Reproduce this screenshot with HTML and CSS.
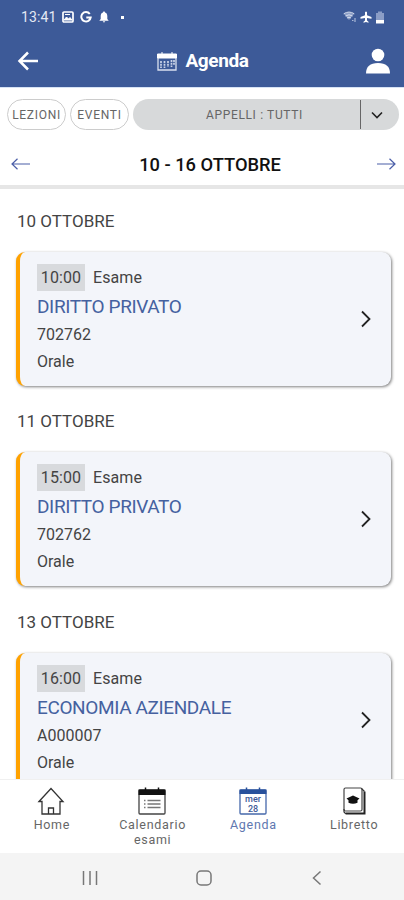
FILE: index.html
```html
<!DOCTYPE html>
<html lang="it">
<head>
    <meta charset="UTF-8">
    <meta name="viewport" content="width=device-width, initial-scale=1.0">
    <title>Agenda</title>
    <link rel="stylesheet" href="styles.css">
</head>
<body>
    <div class="app">
        <header class="header">
            <div class="status-bar">
                <div class="status-left">
                    <span class="clock">13:41</span>
                    <svg width="12" height="12" viewBox="0 0 12 12"><rect x="1" y="1" width="10" height="10" rx="1" fill="none" stroke="#fff" stroke-width="1.7"/><path d="M2 9l2.5-3 2 2L8 6.5 10 9zM3 3.5h5" fill="#fff" stroke="#fff"/></svg>
                    <svg width="12" height="12" viewBox="0 0 12 12"><path d="M9.8 3A4.7 4.7 0 1 0 10.7 6.4H6.3" fill="none" stroke="#fff" stroke-width="2"/></svg>
                    <svg width="12" height="12" viewBox="0 0 12 12"><path d="M6 0.5c.8 0 1 .5 1 1 1.7.5 2.3 1.9 2.3 3.7V8l1.400 1.700H1.300L2.700 8V5.200C2.700 3.400 3.300 2 5 1.500c0-.5.2-1 1-1zM4.700 10.300h2.600L6 11.700z" fill="#fff"/></svg>
                    <span class="dot"></span>
                </div>
                <div class="status-right">
                    <svg width="14" height="12" viewBox="0 0 14 12"><path d="M1 3Q6 -.5 11 3L6 9z" fill="#8fa1c8"/><path d="M.7 2.800Q6-.7 11.300 2.800M2.500 5Q6 2.500 9.500 5M4 7Q6 5.500 8 7" fill="none" stroke="#d5dced"/><path d="M9 9.500h1.500M12 7v4" stroke="#a9b7d6" stroke-width="1.200"/></svg>
                    <svg width="12" height="12" viewBox="0 0 12 12"><path d="M5 1.200Q6-.4 7 1.200V4.300L11.500 6v1.700L7 7v2.500l1.500 1.200v1L6 11l-2.500.700v-1L5 9.500V7L.5 7.700V6L5 4.300z" fill="#fff"/></svg>
                    <svg width="10" height="13" viewBox="0 0 10 13"><path d="M1 2h2V.5h4V2h2v7H1z" fill="#8b9dc6"/><path d="M1 9h8v3.500H1z" fill="#fff"/></svg>
                </div>
            </div>
            <div class="app-bar">
                <svg class="back" width="22" height="20" viewBox="0 0 22 20"><path d="M21 10H3M11 1.500L2.500 10l8.500 8.500" fill="none" stroke="#fff" stroke-width="2.500"/></svg>
                <div class="app-title">
                    <svg width="20" height="19" viewBox="0 0 20 19"><path d="M1 3v15h18V3z" fill="none" stroke="#d9e0ef" stroke-width="1.300"/><path d="M.5 2h19v4H.5zM5 0v3M15 0v3" fill="#fff" stroke="#fff" stroke-width="1"/><path d="M4 9v7M7.500 9v7M11 9v6M14.500 8v7M17 8v5" stroke="#cbd4e8" stroke-width="1.700" stroke-dasharray="2 .7"/></svg>
                    <h1>Agenda</h1>
                </div>
                <svg class="user" width="24" height="26" viewBox="0 0 24 26"><circle cx="12" cy="7" r="6.300" fill="#fff"/><path d="M0 25.500Q0 15 12 15T24 25.500z" fill="#fff"/></svg>
            </div>
        </header>

        <div class="filters">
            <button class="pill">LEZIONI</button>
            <button class="pill">EVENTI</button>
            <button class="select">
                <span class="select-text">APPELLI : TUTTI</span>
                <span class="select-arrow"><svg width="12" height="8" viewBox="0 0 12 8"><path d="M1 1.500l5 5 5-5" fill="none" stroke="#222" stroke-width="1.600"/></svg></span>
            </button>
        </div>

        <div class="week">
            <svg width="20" height="12" viewBox="0 0 20 12"><path d="M19 6H1M6.500.8L1 6l5.500 5.200" fill="none" stroke="#4b5ea8" stroke-width="1.200"/></svg>
            <h2>10 - 16 OTTOBRE</h2>
            <svg width="20" height="12" viewBox="0 0 20 12"><path d="M1 6h18M13.500.8L19 6l-5.500 5.200" fill="none" stroke="#4b5ea8" stroke-width="1.200"/></svg>
        </div>

        <main class="events">
            <section class="day">
                <h3>10 OTTOBRE</h3>
                <div class="card">
                    <div class="info">
                        <p class="kind"><span class="time">10:00</span>Esame</p>
                        <p class="subject">DIRITTO PRIVATO</p>
                        <p class="detail">702762</p>
                        <p class="detail">Orale</p>
                    </div>
                    <svg class="chevron" width="10" height="18" viewBox="0 0 10 18"><path d="M1 1.500L8.500 9 1 16.500" fill="none" stroke="#222" stroke-width="1.800"/></svg>
                </div>
            </section>
            <section class="day">
                <h3>11 OTTOBRE</h3>
                <div class="card">
                    <div class="info">
                        <p class="kind"><span class="time">15:00</span>Esame</p>
                        <p class="subject">DIRITTO PRIVATO</p>
                        <p class="detail">702762</p>
                        <p class="detail">Orale</p>
                    </div>
                    <svg class="chevron" width="10" height="18" viewBox="0 0 10 18"><path d="M1 1.500L8.500 9 1 16.500" fill="none" stroke="#222" stroke-width="1.800"/></svg>
                </div>
            </section>
            <section class="day">
                <h3>13 OTTOBRE</h3>
                <div class="card">
                    <div class="info">
                        <p class="kind"><span class="time">16:00</span>Esame</p>
                        <p class="subject">ECONOMIA AZIENDALE</p>
                        <p class="detail">A000007</p>
                        <p class="detail">Orale</p>
                    </div>
                    <svg class="chevron" width="10" height="18" viewBox="0 0 10 18"><path d="M1 1.500L8.500 9 1 16.500" fill="none" stroke="#222" stroke-width="1.800"/></svg>
                </div>
            </section>
        </main>

        <nav class="tabs">
            <a class="tab">
                <svg width="28" height="28" viewBox="0 0 28 28"><path d="M2 14.500L14 1.500l12 13h-3V27H5V14.500zM11.500 27v-6h5v6" fill="none" stroke="#333" stroke-width="1.300"/></svg>
                <span>Home</span>
            </a>
            <a class="tab">
                <svg width="28" height="28" viewBox="0 0 28 28"><rect x="1" y="3" width="26" height="24" rx="1" fill="#fff" stroke="#444" stroke-width="1.300"/><path d="M.5 2.500h27V8H.5z" fill="#111"/><path d="M7.500.5v3M20.500.5v3" stroke="#111" stroke-width="1.500"/><path d="M9.500 13.500h13M9.500 17h13M9.500 20.500h13" stroke="#777" stroke-width="1.700"/><path d="M6 13.500h1.500M6 17h1.500M6 20.500h1.500" stroke="#777" stroke-width="1.500"/></svg>
                <span>Calendario<br>esami</span>
            </a>
            <a class="tab active">
                <svg width="28" height="28" viewBox="0 0 28 28"><rect x="1" y="3" width="26" height="24" rx="1" fill="#fff" stroke="#4668ab" stroke-width="1.300"/><path d="M.5 2.500h27V7H.5z" fill="#28519c"/><path d="M7.500.5v3M20.500.5v3" stroke="#28519c" stroke-width="1.500"/><text class="icon-text" x="14" y="14.500">mer</text><text class="icon-text" x="14" y="25">28</text></svg>
                <span>Agenda</span>
            </a>
            <a class="tab">
                <svg width="28" height="28" viewBox="0 0 28 28"><path d="M6 26.500h18.500V4.500" fill="none" stroke="#222" stroke-width="2"/><rect x="4" y="1" width="18" height="23" rx="1.500" fill="#fff" stroke="#444" stroke-width="1.200"/><path d="M4 22v3l2 2M21.500 1.500l3 3" fill="none" stroke="#333" stroke-width="1.200"/><path d="M13 8.500l6.500 3-2 1.700v2.500q-4.500 2.200-9 0v-2.500l-2-1.700z" fill="#111"/></svg>
                <span>Libretto</span>
            </a>
        </nav>

        <footer class="system-nav">
            <svg width="16" height="16" viewBox="0 0 16 16"><path d="M1.500 1v14M8 1v14M14.500 1v14" stroke="#777" stroke-width="1.500"/></svg>
            <svg width="16" height="16" viewBox="0 0 16 16"><rect x="1" y="1" width="14" height="14" rx="4" fill="none" stroke="#777" stroke-width="1.500"/></svg>
            <svg width="16" height="16" viewBox="0 0 16 16"><path d="M11.500 1.500L4.500 8l7 6.500" fill="none" stroke="#777" stroke-width="1.500"/></svg>
        </footer>
    </div>
</body>
</html>
```

FILE: styles.css
```css
* {
    box-sizing: border-box;
}

body {
    margin: 0;
    background-color: #fff;
    color: #444;
    font-family: Roboto, sans-serif;
}

h1, h2, h3, p {
    margin: 0;
}

svg {
    display: block;
    flex-shrink: 0;
}

.app {
    display: flex;
    flex-direction: column;
    height: 900px;
    width: 404px;
    overflow: hidden;
}

.header {
    height: 88px;
    flex-shrink: 0;
    background-color: #3d5a98;
    border-bottom: 1px solid #d6e2f5;
    color: #fff;
}

.status-bar {
    display: flex;
    align-items: center;
    justify-content: space-between;
    height: 34px;
    padding: 0 19px 0 21px;
}

.status-left, .status-right {
    display: flex;
    align-items: center;
}

.status-left {
    gap: 6px;
}

.status-right {
    gap: 3px;
}

.clock {
    font-size: 14px;
    letter-spacing: 0.1px;
    color: #e4e9f4;
}

.dot {
    width: 3px;
    height: 3px;
    margin-left: 5px;
    background-color: #fff;
}

.app-bar {
    display: flex;
    align-items: center;
    justify-content: space-between;
    height: 54px;
    padding: 0 14px 0 17px;
}

.app-title {
    display: flex;
    align-items: center;
    gap: 9px;
}

.app-title h1 {
    font-size: 19px;
    font-weight: 700;
    line-height: 24px;
    letter-spacing: -0.4px;
}

.filters {
    display: flex;
    gap: 4px;
    height: 55px;
    flex-shrink: 0;
    padding: 11px 5px 13px 7px;
}

.pill, .select {
    padding: 0;
    border-radius: 16px;
    font-family: inherit;
    font-size: 12px;
    color: #666;
}

.pill {
    width: 59px;
    border: 1px solid #ccc;
    background-color: #fff;
    letter-spacing: 0.7px;
}

.select {
    display: flex;
    flex: 1;
    align-items: center;
    border: none;
    background-color: #d7d9da;
    letter-spacing: 0.65px;
}

.select-text {
    flex: 1;
    padding-left: 16px;
}

.select-arrow {
    display: flex;
    align-items: center;
    height: 29px;
    width: 39px;
    padding-left: 10px;
    border-left: 1px solid #666;
}

.week {
    display: flex;
    align-items: center;
    justify-content: space-between;
    height: 46px;
    flex-shrink: 0;
    padding: 0 8px 0 11px;
    border-bottom: 4px solid #e6e6e6;
}

.week h2 {
    padding-left: 13px;
    font-size: 18.3px;
    font-weight: 500;
    color: #111;
}

.events {
    flex: 1;
    min-height: 0;
    overflow: hidden;
    padding: 0 13px 0 16px;
}

.day {
    height: 200.3px;
}

.day h3 {
    height: 63px;
    padding: 22px 0 0 1px;
    font-size: 17px;
    font-weight: 400;
    line-height: 20px;
}

.card {
    display: flex;
    align-items: center;
    justify-content: space-between;
    height: 134px;
    padding: 0 20px 0 17px;
    border-left: 4px solid #ffa200;
    border-radius: 9px;
    background-color: #f3f5fa;
    box-shadow: 1px 1px 3px rgba(0, 0, 0, 0.5);
}

.info {
    align-self: flex-start;
    padding-top: 12px;
}

.kind {
    display: flex;
    align-items: center;
    gap: 8px;
    height: 27px;
    font-size: 16px;
    letter-spacing: 0.1px;
}

.time {
    width: 48px;
    background-color: #d8dadd;
    line-height: 27px;
    text-align: center;
}

.subject {
    padding-top: 1px;
    color: #4561a0;
    font-size: 19px;
    line-height: 29px;
    letter-spacing: -0.38px;
}

.detail {
    font-size: 16px;
    line-height: 27px;
}

.tabs {
    display: grid;
    grid-template-columns: repeat(4, 1fr);
    height: 74px;
    flex-shrink: 0;
    padding: 7px 0 0 1px;
    border-top: 1px solid #f0f0f0;
}

.tab {
    display: flex;
    flex-direction: column;
    align-items: center;
    font-size: 12.5px;
    line-height: 15px;
    letter-spacing: 0.7px;
    text-align: center;
    color: #666;
}

.active {
    color: #6078b0;
}

.tab span {
    padding: 2px 0 0 1px;
}

.icon-text {
    font-size: 9px;
    font-weight: 500;
    letter-spacing: 0;
    text-anchor: middle;
    fill: #3d5a98;
}

.system-nav {
    display: flex;
    align-items: center;
    justify-content: center;
    gap: 97.5px;
    height: 47px;
    flex-shrink: 0;
    padding: 3px 0 0 3px;
    background-color: #f4f4f4;
}
```
